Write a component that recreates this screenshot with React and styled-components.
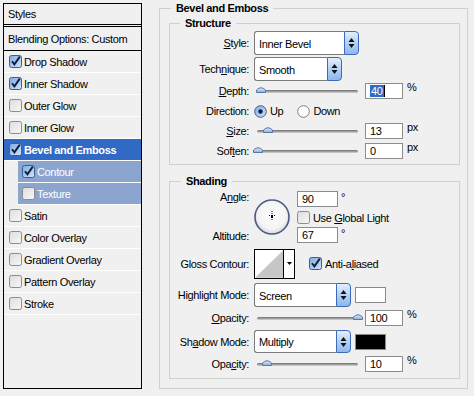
import React from 'react';
import styled, { createGlobalStyle } from 'styled-components';

const GlobalStyle = createGlobalStyle`
    html, body {
        margin: 0;
        padding: 0;
        background: #f0f0f0;
    }
    body {
        font-family: "Liberation Sans", Arial, sans-serif;
        font-size: 11px;
        letter-spacing: -0.35px;
        color: #000;
    }
    u {
        text-decoration-thickness: 1px;
        text-underline-offset: 1px;
    }
`;

const Dialog = styled.div`
    display: flex;
    width: 474px;
    height: 396px;
    box-sizing: border-box;
    padding: 2px 0 0 3px;
    background: #f0f0f0;
`;

/* ---------- left list ---------- */

const StyleList = styled.div`
    width: 139px;
    height: 386px;
    margin-top: 1px;
    box-sizing: border-box;
    border: 1px solid #000;
    display: flex;
    flex-direction: column;
`;

const ListHeader = styled.div`
    display: flex;
    align-items: center;
    height: ${props => props.$h}px;
    padding-left: 4px;
    border-bottom: ${props => props.$double ? '3px double #000' : '1px solid #000'};
    box-sizing: content-box;
`;

const Item = styled.div`
    display: flex;
    align-items: center;
    gap: 2px;
    height: 21px;
    border-bottom: 1px solid #fff;
    margin-left: ${props => (props.$sub ? 14 : 0)}px;
    padding-left: ${props => (props.$sub ? 4 : 5)}px;
    background: ${props => (props.$active ? '#316ac5' : props.$sub ? '#8ba5cf' : 'transparent')};
    color: ${props => (props.$active || props.$sub ? '#fff' : '#000')};
    font-weight: ${props => (props.$active ? 'bold' : 'normal')};
`;

/* ---------- right side ---------- */

const RightPane = styled.div`
    margin-left: 17px;
    width: 309px;
`;

const Group = styled.fieldset`
    margin: ${props => props.$mt || 0}px 0 0 0;
    padding: ${props => props.$pad};
    height: ${props => (props.$h ? `${props.$h}px` : 'auto')};
    border: 1px solid #d0d0cc;
    min-inline-size: 0;
    box-sizing: border-box;
`;

const Legend = styled.legend`
    margin-left: ${props => props.$offset}px;
    padding: 0 5px;
    font-weight: bold;
    line-height: 13px;
`;

const Row = styled.div`
    display: flex;
    align-items: center;
    height: ${props => props.$h}px;
    margin-top: ${props => props.$mt || 0}px;
`;

const Label = styled.div`
    width: 79px;
    flex: none;
    text-align: right;
    margin-right: 5px;
    white-space: nowrap;
`;

const SelectBox = styled.div`
    display: flex;
    width: ${props => props.$w}px;
    height: ${props => props.$h}px;
    flex: none;
`;

const SelectValue = styled.div`
    flex: 1;
    display: flex;
    align-items: center;
    padding-left: 4px;
    padding-top: 1px;
    background: #fff;
    border: 1px solid #7a7a7a;
    border-right: none;
    border-radius: 3px 0 0 3px;
`;

const SelectButton = styled.div`
    width: 15px;
    display: flex;
    align-items: center;
    justify-content: center;
    box-sizing: border-box;
    border: 1px solid #3d6ab8;
    border-radius: 0 4px 4px 0;
    background: linear-gradient(to bottom, #e4effc 0%, #b9d4f6 45%, #8db7ee 100%);
`;

const SliderWrap = styled.div`
    position: relative;
    width: 104px;
    height: 14px;
    flex: none;
`;

const Track = styled.div`
    margin: 6px 0 0 3px;
    height: 3px;
    border-radius: 2px;
    background: linear-gradient(to bottom, #6e6e6e, #a9a9a9 60%, #d8d8d8);
`;

const Thumb = styled.svg`
    position: absolute;
    top: 2px;
`;

const NumField = styled.div`
    width: ${props => props.$w || 38}px;
    height: 16px;
    box-sizing: border-box;
    margin-left: ${props => props.$ml || 0}px;
    padding-left: 4px;
    display: flex;
    align-items: center;
    background: #fff;
    border: 1px solid #8c8c8c;
    flex: none;
`;

const Selected = styled.span`
    background: #316ac5;
    color: #fff;
    padding: 0 1px;
    line-height: 12px;
    border-right: 1px solid #000;
`;

const Unit = styled.span`
    margin-left: ${props => props.$ml ?? 4}px;
    align-self: flex-start;
`;

const Choice = styled.label`
    display: flex;
    align-items: center;
    gap: 3px;
    margin-left: ${props => props.$ml || 0}px;
`;

const Swatch = styled.div`
    width: 31px;
    height: 16px;
    margin-left: 4px;
    box-sizing: border-box;
    border: 1px solid #8a8a8a;
    background: ${props => props.$color};
`;

const AngleBlock = styled.div`
    display: flex;
    height: 56px;
    margin-top: 1px;
`;

const AngleLabels = styled.div`
    width: 79px;
    display: flex;
    flex-direction: column;
    justify-content: space-between;
    align-items: flex-end;
    padding: 2px 0 2px;
    line-height: 13px;
`;

const Dial = styled.svg`
    margin: 10px 0 0 5px;
    flex: none;
`;

const AngleControls = styled.div`
    margin-left: 7px;
    padding-top: 2px;
    display: flex;
    flex-direction: column;
`;

const ValueLine = styled.div`
    display: flex;
    margin-top: ${props => props.$mt || 0}px;
`;

const ContourBox = styled.div`
    display: flex;
    width: 41px;
    height: 30px;
    box-sizing: border-box;
    border: 1px solid #000;
    background: #fff;
    flex: none;
`;

const ContourArrow = styled.div`
    width: 10px;
    border-left: 1px solid #000;
    display: flex;
    align-items: center;
    justify-content: center;
`;

/* ---------- drawings ---------- */

const Defs = () => (
    <svg width="0" height="0" style={{ position: 'absolute' }}>
        <defs>
            <linearGradient id="cbOff" x1="0" y1="0" x2="1" y2="1">
                <stop offset="0" stopColor="#dcdcdc" />
                <stop offset="1" stopColor="#f8f8f8" />
            </linearGradient>
            <linearGradient id="cbOn" x1="0" y1="0" x2="1" y2="1">
                <stop offset="0" stopColor="#7fa9e2" />
                <stop offset="1" stopColor="#d3e4f9" />
            </linearGradient>
            <radialGradient id="dialFill" cx="50%" cy="45%" r="55%">
                <stop offset="0" stopColor="#ffffff" />
                <stop offset="0.75" stopColor="#f3f3f3" />
                <stop offset="1" stopColor="#d6d6d6" />
            </radialGradient>
            <linearGradient id="thumbFill" x1="0" y1="0" x2="0" y2="1">
                <stop offset="0" stopColor="#e3edf9" />
                <stop offset="1" stopColor="#8eacd6" />
            </linearGradient>
        </defs>
    </svg>
);

const CheckBox = ({ checked }) => (
    <svg width="13" height="13" viewBox="0 0 13 13" style={{ flex: 'none' }}>
        <rect
            x="0.5"
            y="0.5"
            width="12"
            height="12"
            rx="2"
            fill={checked ? 'url(#cbOn)' : 'url(#cbOff)'}
            stroke={checked ? '#3a5f94' : '#8b8b8b'}
        />
        {checked && (
            <path d="M3 6.2 L5.4 9.4 L10.8 1.6" fill="none" stroke="#0d1e3c" strokeWidth="1.9" />
        )}
    </svg>
);

const Radio = ({ checked }) => (
    <svg width="13" height="13" viewBox="0 0 13 13" style={{ flex: 'none' }}>
        <circle
            cx="6.5"
            cy="6.5"
            r="5.8"
            fill={checked ? 'url(#cbOn)' : '#fff'}
            stroke={checked ? '#3a5f94' : '#7f7f7f'}
        />
        {checked && <circle cx="6.5" cy="6.5" r="2.2" fill="#0d1e3c" />}
    </svg>
);

const SpinArrows = () => (
    <svg width="7" height="12" viewBox="0 0 7 12">
        <path d="M3.5 1 L6.5 5 L0.5 5 Z" fill="#111" />
        <path d="M0.5 7 L6.5 7 L3.5 11 Z" fill="#111" />
    </svg>
);

const Select = ({ value, w, h = 24 }) => (
    <SelectBox $w={w} $h={h}>
        <SelectValue>{value}</SelectValue>
        <SelectButton>
            <SpinArrows />
        </SelectButton>
    </SelectBox>
);

const Slider = ({ at }) => (
    <SliderWrap>
        <Track />
        <Thumb width="10" height="7" viewBox="0 0 10 7" style={{ left: at - 5 }}>
            <path d="M0.5 6.5 L0.5 4 Q5 -0.5 9.5 4 L9.5 6.5 Z" fill="url(#thumbFill)" stroke="#5476a8" />
        </Thumb>
    </SliderWrap>
);

const AngleDial = () => (
    <Dial width="36" height="36" viewBox="0 0 36 36">
        <circle cx="18" cy="18" r="17" fill="url(#dialFill)" stroke="#4c5a86" strokeWidth="1.6" />
        <rect x="17.5" y="12" width="1" height="1" fill="#000" />
        <rect x="17.5" y="14" width="1" height="1" fill="#000" />
        <rect x="15" y="16" width="1" height="1" fill="#000" />
        <rect x="20" y="16" width="1" height="1" fill="#000" />
        <rect x="17" y="16" width="2" height="3" fill="#000" />
        <rect x="17.5" y="20" width="1" height="1" fill="#000" />
    </Dial>
);

const GlossContour = () => (
    <ContourBox>
        <svg width="29" height="28" viewBox="0 0 29 28">
            <path d="M0 28 L29 0 L29 28 Z" fill="#c6c6c6" />
        </svg>
        <ContourArrow>
            <svg width="5" height="3" viewBox="0 0 5 3">
                <path d="M0 0 L5 0 L2.5 3 Z" fill="#000" />
            </svg>
        </ContourArrow>
    </ContourBox>
);

const styleItems = [
    { label: 'Drop Shadow', checked: true },
    { label: 'Inner Shadow', checked: true },
    { label: 'Outer Glow' },
    { label: 'Inner Glow' },
    { label: 'Bevel and Emboss', checked: true, active: true },
    { label: 'Contour', checked: true, sub: true },
    { label: 'Texture', sub: true },
    { label: 'Satin' },
    { label: 'Color Overlay' },
    { label: 'Gradient Overlay' },
    { label: 'Pattern Overlay' },
    { label: 'Stroke' },
];

const App = () => (
    <>
        <GlobalStyle />
        <Defs />
        <Dialog>
            <StyleList>
                <ListHeader $h={20} $double>Styles</ListHeader>
                <ListHeader $h={23}>Blending Options: Custom</ListHeader>
                {styleItems.map(item => (
                    <Item key={item.label} $sub={item.sub} $active={item.active}>
                        <CheckBox checked={item.checked} />
                        <span>{item.label}</span>
                    </Item>
                ))}
            </StyleList>

            <RightPane>
                <Group $pad="0 7px 9px 9px" $h={387}>
                    <Legend $offset={2}>Bevel and Emboss</Legend>

                    <Group $mt={2} $pad="1px 0 3px 0">
                        <Legend $offset={10}>Structure</Legend>
                        <Row $h={24}>
                            <Label><u>S</u>tyle:</Label>
                            <Select value="Inner Bevel" w={105} />
                        </Row>
                        <Row $h={24} $mt={2}>
                            <Label>Tech<u>n</u>ique:</Label>
                            <Select value="Smooth" w={88} />
                        </Row>
                        <Row $h={20}>
                            <Label><u>D</u>epth:</Label>
                            <Slider at={7} />
                            <NumField $ml={7}>
                                <Selected>40</Selected>
                            </NumField>
                            <Unit>%</Unit>
                        </Row>
                        <Row $h={20}>
                            <Label>Direction:</Label>
                            <Choice>
                                <Radio checked />
                                <span>Up</span>
                            </Choice>
                            <Choice $ml={14}>
                                <Radio />
                                <span>Down</span>
                            </Choice>
                        </Row>
                        <Row $h={20}>
                            <Label><u>S</u>ize:</Label>
                            <Slider at={14} />
                            <NumField $ml={7}>13</NumField>
                            <Unit>px</Unit>
                        </Row>
                        <Row $h={20}>
                            <Label>Sof<u>t</u>en:</Label>
                            <Slider at={4} />
                            <NumField $ml={7}>0</NumField>
                            <Unit>px</Unit>
                        </Row>
                    </Group>

                    <Group $mt={10} $pad="0 0 4px 0">
                        <Legend $offset={11}>Shading</Legend>
                        <AngleBlock>
                            <AngleLabels>
                                <span>A<u>n</u>gle:</span>
                                <span>Altitude:</span>
                            </AngleLabels>
                            <AngleDial />
                            <AngleControls>
                                <ValueLine>
                                    <NumField $w={41}>90</NumField>
                                    <Unit $ml={3}>°</Unit>
                                </ValueLine>
                                <ValueLine $mt={4}>
                                    <Choice>
                                        <CheckBox />
                                        <span>Use <u>G</u>lobal Light</span>
                                    </Choice>
                                </ValueLine>
                                <ValueLine $mt={3}>
                                    <NumField $w={41}>67</NumField>
                                    <Unit $ml={3}>°</Unit>
                                </ValueLine>
                            </AngleControls>
                        </AngleBlock>
                        <Row $h={31} $mt={3}>
                            <Label>Gloss Contour:</Label>
                            <GlossContour />
                            <Choice $ml={14}>
                                <CheckBox checked />
                                <span>Anti-a<u>l</u>iased</span>
                            </Choice>
                        </Row>
                        <Row $h={24} $mt={4}>
                            <Label>Hi<u>g</u>hlight Mode:</Label>
                            <Select value="Screen" w={97} />
                            <Swatch $color="#fff" />
                        </Row>
                        <Row $h={20} $mt={1}>
                            <Label><u>O</u>pacity:</Label>
                            <Slider at={104} />
                            <NumField $ml={7}>100</NumField>
                            <Unit>%</Unit>
                        </Row>
                        <Row $h={23} $mt={2}>
                            <Label>Sh<u>a</u>dow Mode:</Label>
                            <Select value="Multiply" w={97} h={23} />
                            <Swatch $color="#000" />
                        </Row>
                        <Row $h={20} $mt={1}>
                            <Label>Opa<u>c</u>ity:</Label>
                            <Slider at={13} />
                            <NumField $ml={7}>10</NumField>
                            <Unit>%</Unit>
                        </Row>
                    </Group>
                </Group>
            </RightPane>
        </Dialog>
    </>
);

export default App;
